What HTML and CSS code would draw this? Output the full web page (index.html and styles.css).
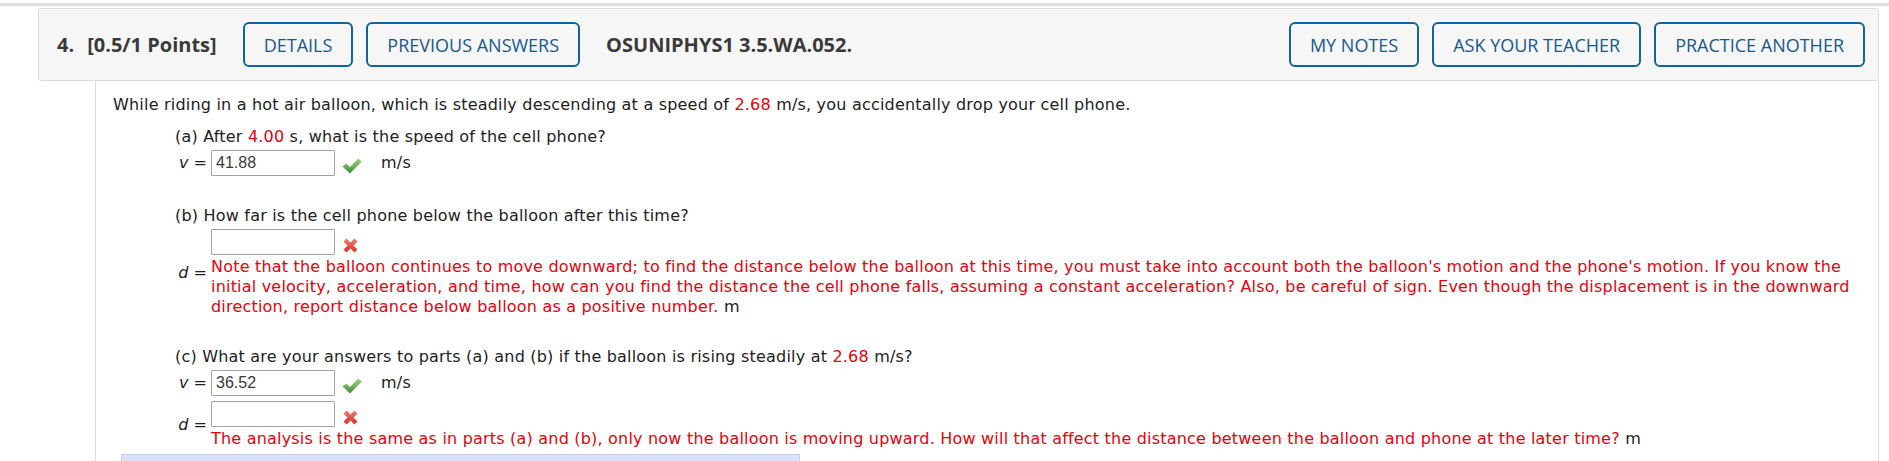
FILE: index.html
```html
<!DOCTYPE html>
<html lang="en">
<head>
    <meta charset="UTF-8">
    <meta name="viewport" content="width=device-width, initial-scale=1.0">
    <title>Question 4</title>
    <link rel="stylesheet" href="styles.css">
</head>
<body>
    <div class="topline"></div>

    <div class="question">
        <div class="q-header">
            <span class="q-num">4.</span>
            <span class="q-points">[0.5/1 Points]</span>
            <button class="q-btn">DETAILS</button>
            <button class="q-btn q-btn-wide">PREVIOUS ANSWERS</button>
            <span class="q-code">OSUNIPHYS1 3.5.WA.052.</span>
            <div class="q-actions">
                <button class="q-btn">MY NOTES</button>
                <button class="q-btn">ASK YOUR TEACHER</button>
                <button class="q-btn">PRACTICE ANOTHER</button>
            </div>
        </div>

        <div class="q-body">
            <p class="intro">While riding in a hot air balloon, which is steadily descending at a speed of <span class="red">2.68</span> m/s, you accidentally drop your cell phone.</p>

            <!-- part a -->
            <div class="part part-first">
                <p class="part-text">(a) After <span class="red">4.00</span> s, what is the speed of the cell phone?</p>
                <div class="answer">
                    <span class="var"><i>v</i> =</span>
                    <div class="answer-main">
                        <div class="field">
                            <input type="text" value="41.88">
                            <svg class="icon-check" width="20" height="16" viewBox="0 0 20 16">
                                <defs>
                                    <linearGradient id="chk1" x1="0" y1="0" x2="0" y2="1">
                                        <stop offset="0" stop-color="#9cd47c"/>
                                        <stop offset="1" stop-color="#3f8f32"/>
                                    </linearGradient>
                                </defs>
                                <path d="M0.5 8.5 L4.3 5.6 L8 9 L16.2 0.6 L19.7 3.5 L8 15.4 Z" fill="url(#chk1)"/>
                            </svg>
                            <span class="unit">m/s</span>
                        </div>
                    </div>
                </div>
            </div>

            <!-- part b -->
            <div class="part">
                <p class="part-text">(b) How far is the cell phone below the balloon after this time?</p>
                <div class="answer">
                    <span class="var"><i>d</i> =</span>
                    <div class="answer-main">
                        <div class="field">
                            <input type="text" value="">
                            <svg class="icon-x" width="15" height="15" viewBox="0 0 14 14">
                                <defs>
                                    <linearGradient id="xg1" x1="0" y1="0" x2="0" y2="1">
                                        <stop offset="0" stop-color="#f27a6c"/>
                                        <stop offset="1" stop-color="#d3322a"/>
                                    </linearGradient>
                                </defs>
                                <path d="M0.5 3.3 L3.3 0.5 L7 4.2 L10.7 0.5 L13.5 3.3 L9.8 7 L13.5 10.7 L10.7 13.5 L7 9.8 L3.3 13.5 L0.5 10.7 L4.2 7 Z" fill="url(#xg1)"/>
                            </svg>
                        </div>
                        <div class="hint">Note that the balloon continues to move downward; to find the distance below the balloon at this time, you must take into account both the balloon's motion and the phone's motion. If you know the initial velocity, acceleration, and time, how can you find the distance the cell phone falls, assuming a constant acceleration? Also, be careful of sign. Even though the displacement is in the downward direction, report distance below balloon as a positive number. <span class="unit-plain">m</span></div>
                    </div>
                </div>
            </div>

            <!-- part c -->
            <div class="part">
                <p class="part-text">(c) What are your answers to parts (a) and (b) if the balloon is rising steadily at <span class="red">2.68</span> m/s?</p>
                <div class="answer">
                    <span class="var"><i>v</i> =</span>
                    <div class="answer-main">
                        <div class="field">
                            <input type="text" value="36.52">
                            <svg class="icon-check" width="20" height="16" viewBox="0 0 20 16">
                                <defs>
                                    <linearGradient id="chk2" x1="0" y1="0" x2="0" y2="1">
                                        <stop offset="0" stop-color="#9cd47c"/>
                                        <stop offset="1" stop-color="#3f8f32"/>
                                    </linearGradient>
                                </defs>
                                <path d="M0.5 8.5 L4.3 5.6 L8 9 L16.2 0.6 L19.7 3.5 L8 15.4 Z" fill="url(#chk2)"/>
                            </svg>
                            <span class="unit">m/s</span>
                        </div>
                    </div>
                </div>
                <div class="answer answer-next">
                    <span class="var"><i>d</i> =</span>
                    <div class="answer-main">
                        <div class="field">
                            <input type="text" value="">
                            <svg class="icon-x" width="15" height="15" viewBox="0 0 14 14">
                                <defs>
                                    <linearGradient id="xg2" x1="0" y1="0" x2="0" y2="1">
                                        <stop offset="0" stop-color="#f27a6c"/>
                                        <stop offset="1" stop-color="#d3322a"/>
                                    </linearGradient>
                                </defs>
                                <path d="M0.5 3.3 L3.3 0.5 L7 4.2 L10.7 0.5 L13.5 3.3 L9.8 7 L13.5 10.7 L10.7 13.5 L7 9.8 L3.3 13.5 L0.5 10.7 L4.2 7 Z" fill="url(#xg2)"/>
                            </svg>
                        </div>
                        <div class="hint">The analysis is the same as in parts (a) and (b), only now the balloon is moving upward. How will that affect the distance between the balloon and phone at the later time? <span class="unit-plain">m</span></div>
                    </div>
                </div>
            </div>

            <div class="hint-bar"></div>
        </div>
    </div>
</body>
</html>
```

FILE: styles.css
```css
body {
    margin: 0;
    background: #fff;
}

.topline {
    height: 3px;
    margin-top: 3px;
    background: #dedede;
}

.question {
    margin: 2px 10px 0 38px;
}

.q-header {
    display: flex;
    align-items: center;
    height: 73px;
    box-sizing: border-box;
    padding: 0 13px 0 18px;
    background: #f6f6f6;
    border: 1px solid #dcdcdc;
    border-radius: 3px;
    font-family: "Open Sans", sans-serif;
    color: #3a3a3a;
}

.q-num, .q-points, .q-code {
    font-size: 20px;
    font-weight: 700;
}

.q-num {
    margin-right: 13px;
}
.q-points {
    margin-right: 26px;
}
.q-code {
    margin-left: 13px;
}

.q-btn {
    height: 45px;
    padding: 0 19px;
    margin-right: 13px;
    background: transparent;
    border: 2px solid #0f64a0;
    border-radius: 6px;
    font-family: "Open Sans", sans-serif;
    font-size: 18px;
    color: #17588e;
    cursor: pointer;
}

.q-actions {
    display: flex;
    gap: 13px;
    margin-left: auto;
}
.q-actions .q-btn {
    margin-right: 0;
}

.q-body {
    margin-left: 57px;
    padding: 14px 18px 0 17px;
    border-left: 1px solid #dcdcdc;
    border-right: 1px solid #dcdcdc;
    font-family: Verdana, "DejaVu Sans", sans-serif;
    font-size: 16px;
    letter-spacing: 0.2px;
    line-height: 20px;
    color: #222;
}

.q-body p {
    margin: 0;
}

.red {
    color: #e8000b;
}

.part {
    margin-left: 62px;
    margin-top: 30px;
}
.part-first {
    margin-top: 12px;
}

.answer {
    display: flex;
    align-items: center;
    margin-top: 3px;
}
.answer-next {
    margin-top: 5px;
}

.var {
    width: 36px;
    padding-right: 4px;
    box-sizing: border-box;
    text-align: right;
    flex-shrink: 0;
    letter-spacing: 0;
}

.answer-main {
    flex: 1;
}

.field {
    display: flex;
    align-items: center;
}

.field input {
    width: 124px;
    height: 26px;
    box-sizing: border-box;
    margin: 0;
    padding: 0 4px;
    border: 1px solid #a3a3a3;
    border-radius: 1px;
    font-family: "Liberation Sans", Arial, sans-serif;
    font-size: 16px;
    letter-spacing: 0;
    color: #3a3a3a;
}

.icon-check {
    margin: 6px 0 0 7px;
}
.icon-x {
    margin: 6px 0 0 8px;
}

.unit {
    margin-left: 19px;
}

.hint {
    margin-top: 2px;
    color: #e8000b;
}
.unit-plain {
    color: #222;
}

.hint-bar {
    margin: 5px 0 0 8px;
    width: 677px;
    height: 30px;
    background: #dbe1f6;
    border: 1px solid #c7cfe9;
}
```
